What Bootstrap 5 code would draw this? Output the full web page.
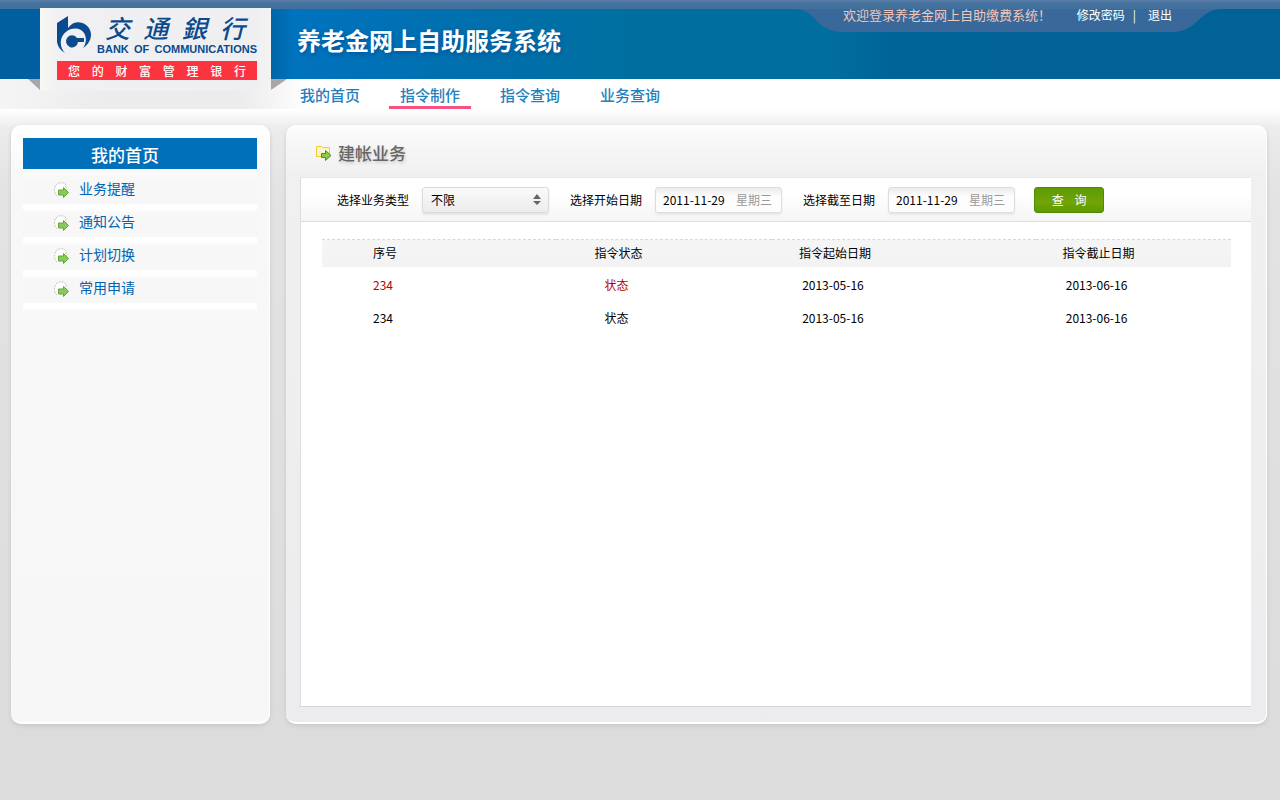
<!DOCTYPE html>
<html lang="zh-CN">
<head>
<meta charset="utf-8">
<meta name="viewport" content="width=device-width, initial-scale=1">
<title>养老金网上自助服务系统</title>
<link href="https://cdn.jsdelivr.net/npm/bootstrap@5.3.0/dist/css/bootstrap.min.css" rel="stylesheet">
<style>
body{font-family:"Noto Sans CJK SC",sans-serif;font-size:12px;line-height:18px;color:#000;min-height:100vh;
  background:linear-gradient(#fff 109px,#ececec 128px,#e3e3e3 190px,#dcdcdc 740px) #dcdcdc}
a{text-decoration:none}
.site-head{height:79px;background:linear-gradient(90deg,#005f9f 0,#0064a6 21%,#0073bf 23%,#0070b0 34%,#006f9f 50%,#006e9e 65%,#006398 70%,#006297 100%)}
.top-strip{height:9px;background:linear-gradient(#5a7da8,#41719c 4px)}
.brand{left:40px;top:8px;width:231px;height:83px;padding:6px 14px 0 17px;background:linear-gradient(90deg,#f7f7f2,#f0f0f3 20px,#efeff2 210px,#f3f3f3)}
.brand::before,.brand::after{content:"";position:absolute;top:71px;height:11px;background:#aaa4ab}
.brand::before{left:-12px;width:12px;clip-path:polygon(0 0,100% 0,100% 100%)}
.brand::after{right:-16px;width:16px;clip-path:polygon(0 0,100% 0,0 100%)}
.brand-cn{font-family:"Noto Sans CJK TC","Noto Sans CJK SC",sans-serif;font-size:25px;line-height:27px;font-weight:500;font-style:italic;color:#0b4a8c;padding:0 12px 2px}
.brand-en{font-family:"Liberation Sans",sans-serif;font-weight:700;font-size:11px;line-height:12px;color:#0b4a8c;white-space:nowrap}
.slogan{background:#fb3440;color:#fff;height:19px;line-height:19px;font-weight:500;padding:0 11px;margin-top:6px}
.sys-title{font-size:24px;line-height:32px;font-weight:700;color:#fff;padding-left:297px;padding-top:15px;text-shadow:1px 2px 4px #00539b}
.user-tab{right:60px;top:0;width:425px;height:32px;color:#fff}
.user-tab svg{left:0;top:9px}
.user-row{padding:6px 48px 0 48px}
.hello{font-size:13px;color:#f3c6b8}
.main-nav{height:30px;background:linear-gradient(90deg,#f5f5f5,#ececec 100px,#ececec 240px,#fff 310px)}
.main-nav ul{padding-left:289px;gap:18px}
.main-nav a{display:block;width:82px;height:30px;padding-top:5px;text-align:center;font-size:15px;line-height:22px;font-weight:500;color:#2380bd}
.main-nav a.active{border-bottom:3px solid #f9517f}
.work{padding:16px 13px 76px 11px;gap:16px}
.shell{min-height:calc(100vh - 201px);border-radius:10px;box-shadow:0 2px 4px #c8c8c8}
.side{width:259px;padding:13px 12px;background:linear-gradient(#fff,#f8f8f8 50px,#f7f7f7);border:solid #fff;border-width:0 1px 2px 0}
.side h2{height:31px;line-height:33px;font-size:17px;font-weight:500;color:#fff;background:#0070ba;padding-left:68px;margin:0 0 3px}
.side li{height:33px;padding:3px 0 0 31px;background:linear-gradient(#fafafa,#f7f7f7 10px)}
.side li::after{content:"";display:block;height:8px;margin:2px 0 0 -31px;position:relative;background:linear-gradient(#fff 4px,#fafafa)}
.side a{display:block;font-size:14px;line-height:27px;color:#0064b4}
.side svg{margin-right:9px}
.panel{min-width:0;padding:0 15px 15px 14px;background:linear-gradient(#fff,#f8f8f8 12px,#f0f0f0 52px,#ececee);border:solid #fff;border-width:0 1px 2px 0}
.panel-title{height:52px;padding:3px 0 0 16px;gap:6px}
.panel-title h1{font-size:17px;line-height:24px;font-weight:500;color:#666;margin:0;text-shadow:1px 2px 3px #ccc}
.sheet{background:#fff;border-left:1px solid #ddd;border-top:1px solid #e4eceb;border-bottom:1px solid #d4d4d4}
.filters{min-height:44px;padding:0 20px 0 36px;column-gap:21px;background:linear-gradient(#fff 15px,#f5f5f5);border-bottom:1px solid #ddd}
.fld{gap:13px}
.ctl{width:127px;height:26px;border:1px solid #ddd;border-radius:3px;background:#fff;font-size:12px;line-height:18px;color:#000}
select.ctl{appearance:none;padding:0 8px;border-color:#dadada;background:url("data:image/svg+xml,%3Csvg xmlns='http://www.w3.org/2000/svg' width='8' height='11'%3E%3Cpath d='M0 5l4-5 4 5zM0 7h8l-4 4z' fill='%23666'/%3E%3C/svg%3E") no-repeat right 7px center,linear-gradient(#fafafa,#ececec);box-shadow:0 2px 2px #e6e6e6}
.datebox{padding:0 9px 0 7px;background:linear-gradient(#ececec,#fdfdfd 9px);box-shadow:0 2px 2px #e8e8e8}
.datebox input{width:66px;padding:0;border:0;background:none;font-size:12px;line-height:18px;outline-offset:2px}
.datebox span{color:#999}
.go{width:70px;height:26px;border:1px solid #4e8a08;border-radius:3px;background:linear-gradient(#5c9a06,#72a506 60%,#5c9a00);color:#fff;font-size:12px;line-height:22px;padding:0;margin-left:-2px;white-space:pre}
.grid-wrap{padding:17px 20px 20px 21px}
.orders{width:100%;table-layout:fixed}
.orders th{height:27px;font-weight:400;background:linear-gradient(#f5f5f5,#f2f2f2);border-top:1px dashed #d8d8d8}
.orders td{height:33px;padding-top:5px}
.orders th,.orders td{padding-left:27px}
.slot{display:block;width:72px;text-align:center}
.orders td .slot{margin-left:-2px}
.hot{color:#b80000}
</style>
</head>
<body>
<header class="site-head position-relative">
  <div class="top-strip"></div>
  <div class="brand position-absolute">
    <div class="d-flex">
      <svg width="36" height="41" viewBox="0 0 36 41" class="flex-shrink-0" aria-hidden="true">
        <path d="M0 9 11 2V14C16 7 24 7 29 11 37 17 35 28 26 34 31 27 29 19 24 16 16 12 6 17 4 26 3 31 5 36 8 39 1 35-1 28 0 22Z" fill="#0b4a8c"/>
        <path d="M27 28H21A6 6 0 1 1 20 24H27Z" fill="#0b4a8c"/>
      </svg>
      <div class="flex-grow-1">
        <div class="d-flex justify-content-between brand-cn"><span>交</span><span>通</span><span>銀</span><span>行</span></div>
        <div class="brand-en d-flex justify-content-between ps-1"><span>BANK</span><span>OF</span><span>COMMUNICATIONS</span></div>
      </div>
    </div>
    <div class="slogan d-flex justify-content-between"><span>您</span><span>的</span><span>财</span><span>富</span><span>管</span><span>理</span><span>银</span><span>行</span></div>
  </div>
  <div class="sys-title">养老金网上自助服务系统</div>
  <div class="user-tab position-absolute">
    <svg class="position-absolute" width="425" height="23" viewBox="0 0 425 23" aria-hidden="true"><path d="M0 0C22 1 20 23 48 23H378C402 23 404 1 425 0Z" fill="#38699a"/></svg>
    <div class="user-row position-relative d-flex justify-content-between">
      <span class="hello">欢迎登录养老金网上自助缴费系统！</span>
      <span><a href="#" class="text-white">修改密码</a><span class="px-2 mx-0">|</span><a href="#" class="text-white ms-1">退出</a></span>
    </div>
  </div>
</header>
<nav class="main-nav">
  <ul class="list-unstyled d-flex m-0">
    <li><a href="#">我的首页</a></li>
    <li><a href="#" class="active">指令制作</a></li>
    <li><a href="#">指令查询</a></li>
    <li><a href="#">业务查询</a></li>
  </ul>
</nav>
<div class="work d-flex">
  <svg class="d-none" aria-hidden="true">
    <symbol id="arrow" viewBox="0 0 16 16"><path d="M3 14C0 12 0 6 2 3 4 0 10 0 12 3V8" fill="#fff" stroke="#c4c4c4" stroke-dasharray="2 1"/><path d="M4.500 8h5V5.500l5 5-5 5V13h-5z" fill="#8cc860" stroke="#5cac2c"/></symbol>
  </svg>
  <aside class="side shell flex-shrink-0">
    <h2>我的首页</h2>
    <ul class="list-unstyled m-0">
      <li><a href="#"><svg width="16" height="16"><use href="#arrow"/></svg>业务提醒</a></li>
      <li><a href="#"><svg width="16" height="16"><use href="#arrow"/></svg>通知公告</a></li>
      <li><a href="#"><svg width="16" height="16"><use href="#arrow"/></svg>计划切换</a></li>
      <li><a href="#"><svg width="16" height="16"><use href="#arrow"/></svg>常用申请</a></li>
    </ul>
  </aside>
  <main class="panel shell flex-grow-1 d-flex flex-column">
    <div class="panel-title d-flex align-items-center">
      <svg width="16" height="16" viewBox="0 0 16 16" aria-hidden="true"><path d="M.5 1.500h5l1 1h7v9h-13z" fill="#fff7b8" stroke="#f0cc30"/><path d="M2 5.500h10" stroke="#fff"/><path d="M5.500 8.500h4v-3l5.500 5-5.500 5v-3h-4z" fill="#8cc84c" stroke="#3f961f"/></svg>
      <h1>建帐业务</h1>
    </div>
    <section class="sheet flex-grow-1">
      <form class="filters d-flex flex-wrap align-items-center">
        <div class="fld d-flex align-items-center"><label for="kind">选择业务类型</label><select id="kind" class="ctl"><option>不限</option></select></div>
        <div class="fld d-flex align-items-center"><label for="from">选择开始日期</label><div class="ctl datebox d-flex align-items-center justify-content-between"><input id="from" type="text" value="2011-11-29"><span>星期三</span></div></div>
        <div class="fld d-flex align-items-center"><label for="to">选择截至日期</label><div class="ctl datebox d-flex align-items-center justify-content-between"><input id="to" type="text" value="2011-11-29"><span>星期三</span></div></div>
        <button type="button" class="go">查    询</button>
      </form>
      <div class="grid-wrap">
        <table class="orders">
          <colgroup><col style="width:25.700%"><col style="width:23.800%"><col style="width:29%"><col></colgroup>
          <thead><tr><th><span class="slot">序号</span></th><th><span class="slot">指令状态</span></th><th><span class="slot">指令起始日期</span></th><th><span class="slot">指令截止日期</span></th></tr></thead>
          <tbody>
            <tr><td class="hot"><span class="slot">234</span></td><td class="hot"><span class="slot">状态</span></td><td><span class="slot">2013-05-16</span></td><td><span class="slot">2013-06-16</span></td></tr>
            <tr><td><span class="slot">234</span></td><td><span class="slot">状态</span></td><td><span class="slot">2013-05-16</span></td><td><span class="slot">2013-06-16</span></td></tr>
          </tbody>
        </table>
      </div>
    </section>
  </main>
</div>
<script src="https://cdn.jsdelivr.net/npm/bootstrap@5.3.0/dist/js/bootstrap.bundle.min.js"></script>
</body>
</html>
